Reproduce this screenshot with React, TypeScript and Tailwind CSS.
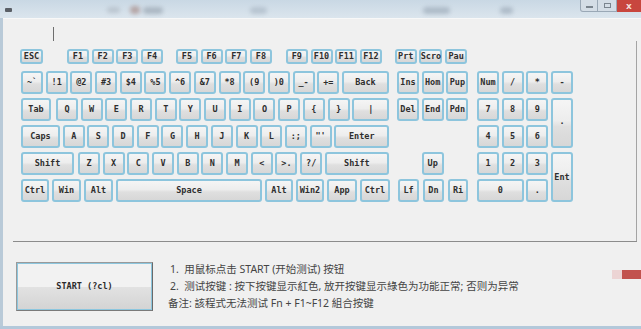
import clsx from "clsx"

function Key({ label, className }: { label: string; className?: string }) {
  return (
    <div
      className={clsx(
        "flex items-center justify-center rounded-[3px] border-2 border-[#8dc5dd] bg-[linear-gradient(to_bottom,#f5f5f5_0%,#ededed_45%,#dfdfdf_58%,#d7d7d7_100%)] font-['DejaVu_Sans_Mono',monospace] text-[8.5px] font-bold leading-none text-[#2e2e2e]",
        className
      )}
    >
      {label}
    </div>
  )
}

const numRow = ["~`", "!1", "@2", "#3", "$4", "%5", "^6", "&7", "*8", "(9", ")0", "_-", "+="]
const qRow = ["Q", "W", "E", "R", "T", "Y", "U", "I", "O", "P", "{", "}"]
const aRow = ["A", "S", "D", "F", "G", "H", "J", "K", "L", ":;", "\"'"]
const zRow = ["Z", "X", "C", "V", "B", "N", "M", "<", ">.", "?/"]

function Keyboard() {
  return (
    <div className="flex flex-col pl-[18px]">
      <div className="-ml-px flex h-[15px] gap-[2.7px]">
        <Key label="ESC" className="w-[23px]" />
        <Key label="F1" className="ml-[21.3px] w-[22px]" />
        <Key label="F2" className="w-[22px]" />
        <Key label="F3" className="w-[22px]" />
        <Key label="F4" className="w-[22px]" />
        <Key label="F5" className="ml-[10.2px] w-[22px]" />
        <Key label="F6" className="w-[22px]" />
        <Key label="F7" className="w-[22px]" />
        <Key label="F8" className="w-[22px]" />
        <Key label="F9" className="ml-[11.2px] w-[22px]" />
        <Key label="F10" className="w-[22px]" />
        <Key label="F11" className="w-[22px]" />
        <Key label="F12" className="w-[22px]" />
        <Key label="Prt" className="ml-[10.2px] w-[22px]" />
        <Key label="Scro" className="w-[23px]" />
        <Key label="Pau" className="w-[22px]" />
      </div>

      <div className="mt-[7px] flex">
        <div className="flex w-[369px] flex-col gap-[4px]">
          <div className="flex h-[23px] gap-[2.7px]">
            {numRow.map((l) => (
              <Key key={l} label={l} className="w-[22px]" />
            ))}
            <Key label="Back" className="w-[47px]" />
          </div>
          <div className="flex h-[23px] gap-[2.7px]">
            <Key label="Tab" className="w-[30px]" />
            {qRow.map((l, i) => (
              <Key key={l} label={l} className={i === 0 ? "ml-[2.3px] w-[22px]" : "w-[22px]"} />
            ))}
            <Key label="|" className="w-[37px]" />
          </div>
          <div className="flex h-[23px] gap-[2.7px]">
            <Key label="Caps" className="w-[39px]" />
            {aRow.map((l) => (
              <Key key={l} label={l} className="w-[22px]" />
            ))}
            <Key label="Enter" className="w-[55px]" />
          </div>
          <div className="flex h-[23px] gap-[2.7px]">
            <Key label="Shift" className="w-[53px]" />
            {zRow.map((l, i) => (
              <Key key={l} label={l} className={i === 0 ? "ml-[1.3px] w-[22px]" : "w-[22px]"} />
            ))}
            <Key label="Shift" className="w-[64px]" />
          </div>
          <div className="flex h-[23px] gap-[3px]">
            <Key label="Ctrl" className="w-[28px]" />
            <Key label="Win" className="w-[29px]" />
            <Key label="Alt" className="w-[29px]" />
            <Key label="Space" className="w-[146px]" />
            <Key label="Alt" className="w-[28px]" />
            <Key label="Win2" className="w-[28px]" />
            <Key label="App" className="w-[30px]" />
            <Key label="Ctrl" className="w-[30px]" />
          </div>
        </div>

        <div className="ml-[7px] grid grid-cols-[repeat(3,22px)] grid-rows-[repeat(5,23px)] gap-x-[2.7px] gap-y-[4px]">
          <Key label="Ins" className="col-start-1 row-start-1" />
          <Key label="Hom" className="col-start-2 row-start-1" />
          <Key label="Pup" className="col-start-3 row-start-1" />
          <Key label="Del" className="col-start-1 row-start-2" />
          <Key label="End" className="col-start-2 row-start-2" />
          <Key label="Pdn" className="col-start-3 row-start-2" />
          <Key label="Up" className="col-start-2 row-start-4" />
          <Key label="Lf" className="col-start-1 row-start-5 ml-px" />
          <Key label="Dn" className="col-start-2 row-start-5 ml-[1.5px]" />
          <Key label="Ri" className="col-start-3 row-start-5 ml-[1.5px]" />
        </div>

        <div className="ml-[8.6px] grid grid-cols-[repeat(4,22px)] grid-rows-[repeat(5,23px)] gap-x-[2.7px] gap-y-[4px]">
          <Key label="Num" />
          <Key label="/" />
          <Key label="*" />
          <Key label="-" />
          <Key label="7" />
          <Key label="8" />
          <Key label="9" />
          <Key label="·" className="row-span-2" />
          <Key label="4" />
          <Key label="5" />
          <Key label="6" />
          <Key label="1" />
          <Key label="2" />
          <Key label="3" />
          <Key label="Ent" className="row-span-2" />
          <Key label="0" className="col-span-2" />
          <Key label="." />
        </div>
      </div>
    </div>
  )
}

export default function App() {
  return (
    <div className="flex h-[329px] w-[641px] flex-col overflow-hidden bg-[#b9cad8]">
      {/* title bar */}
      <div className="flex h-[18px] items-start bg-linear-to-b from-[#c9d8e4] to-[#dbe5ed]">
        <div className="ml-[5px] mt-[8px] h-[4px] w-[7px] rounded-[1px] bg-[#5a5f66]" />
        <div className="ml-[95px] mt-[7px] h-[6px] w-[13px] rounded-full bg-[#aab4be] opacity-60 blur-[2px]" />
        <div className="ml-[10px] mt-[6px] h-[8px] w-[10px] rounded-full bg-[#a88c88] opacity-70 blur-[2px]" />
        <div className="ml-[3px] mt-[7px] h-[7px] w-[20px] rounded-full bg-[#9aa6b2] opacity-70 blur-[2px]" />
        <div className="ml-[87px] mt-[7px] h-[7px] w-[17px] rounded-full bg-[#a4b2c0] opacity-60 blur-[2px]" />
        <div className="ml-[156px] mt-[7px] h-[7px] w-[27px] rounded-full bg-[#9eacba] opacity-70 blur-[2px]" />
        <div className="ml-[50px] mt-[7px] h-[7px] w-[13px] rounded-full bg-[#9eacba] opacity-70 blur-[2px]" />
        <div className="ml-auto flex h-[12px]">
          <div className="flex w-[18px] items-center justify-center rounded-bl-[3px] border border-t-0 border-[#9aa8b6] bg-[#d4dde6]">
            <div className="mt-[2px] h-[2px] w-[7px] bg-[#7a848e]" />
          </div>
          <div className="flex w-[19px] items-center justify-center border border-l-0 border-t-0 border-[#9aa8b6] bg-[#d4dde6]">
            <div className="h-[5px] w-[7px] border border-[#7a848e]" />
          </div>
          <div className="flex w-[24px] items-center justify-center bg-[#c8463e] text-[9px] font-bold leading-none text-[#f4dcd8] font-['DejaVu_Sans',sans-serif]">
            x
          </div>
        </div>
      </div>

      {/* client area */}
      <div className="ml-[3px] flex flex-1 flex-col bg-[#f0f0f0] border-t border-[#f8f8f8]">
        <div className="flex h-[223px] flex-col">
          <div className="flex flex-1 pr-[4px]">
            <div className="flex flex-1 flex-col">
              <div className="ml-[50px] mt-[8px] h-[14px] w-px bg-[#6e6e6e]" />
              <div className="mt-[8px]">
                <Keyboard />
              </div>
            </div>
            <div className="mt-[22px] w-px bg-[#a4a4a4]" />
          </div>
          <div className="ml-[10px] mr-[4px] h-px bg-[#8c8c8c]" />
        </div>

        <div className="flex flex-1 items-start pt-[20px]">
          <div className="ml-[13px] h-[49px] w-[137px] border border-[#9a9a9a] border-b-[#7a7a7a] border-r-[#6a6a6a]">
            <div className="flex h-full w-full flex-col border border-[#8cc6de]">
              <div className="flex flex-1 items-end justify-center bg-[#f2f2f2]">
                <span className="translate-y-[4px] font-['DejaVu_Sans_Mono',monospace] text-[8.5px] font-bold leading-none text-[#2b2b2b]">
                  START (?cl)
                </span>
              </div>
              <div className="flex-1 bg-linear-to-b from-[#e2e2e2] to-[#d4d4d4]" />
            </div>
          </div>
          <div className="ml-[15px] -mt-px flex flex-col font-['Noto_Sans','Noto_Sans_CJK_SC',sans-serif] text-[10.5px] leading-[17px] text-[#444]">
            <div className="ml-[2px]">1.&nbsp;&nbsp;用鼠标点击 START (开始测试) 按钮</div>
            <div className="ml-[2px]">2.&nbsp;&nbsp;测试按键 : 按下按键显示紅色, 放开按键显示綠色为功能正常; 否则为异常</div>
            <div>备注: 該程式无法测试 Fn + F1~F12 組合按键</div>
          </div>
          <div className="ml-auto mt-[8px] flex h-[9px]">
            <div className="w-[10px] bg-[#ecd4d4]" />
            <div className="w-[19px] bg-[#c2524e]" />
          </div>
        </div>
      </div>
      <div className="h-[3px] bg-[#b3c8da]" />
    </div>
  )
}
